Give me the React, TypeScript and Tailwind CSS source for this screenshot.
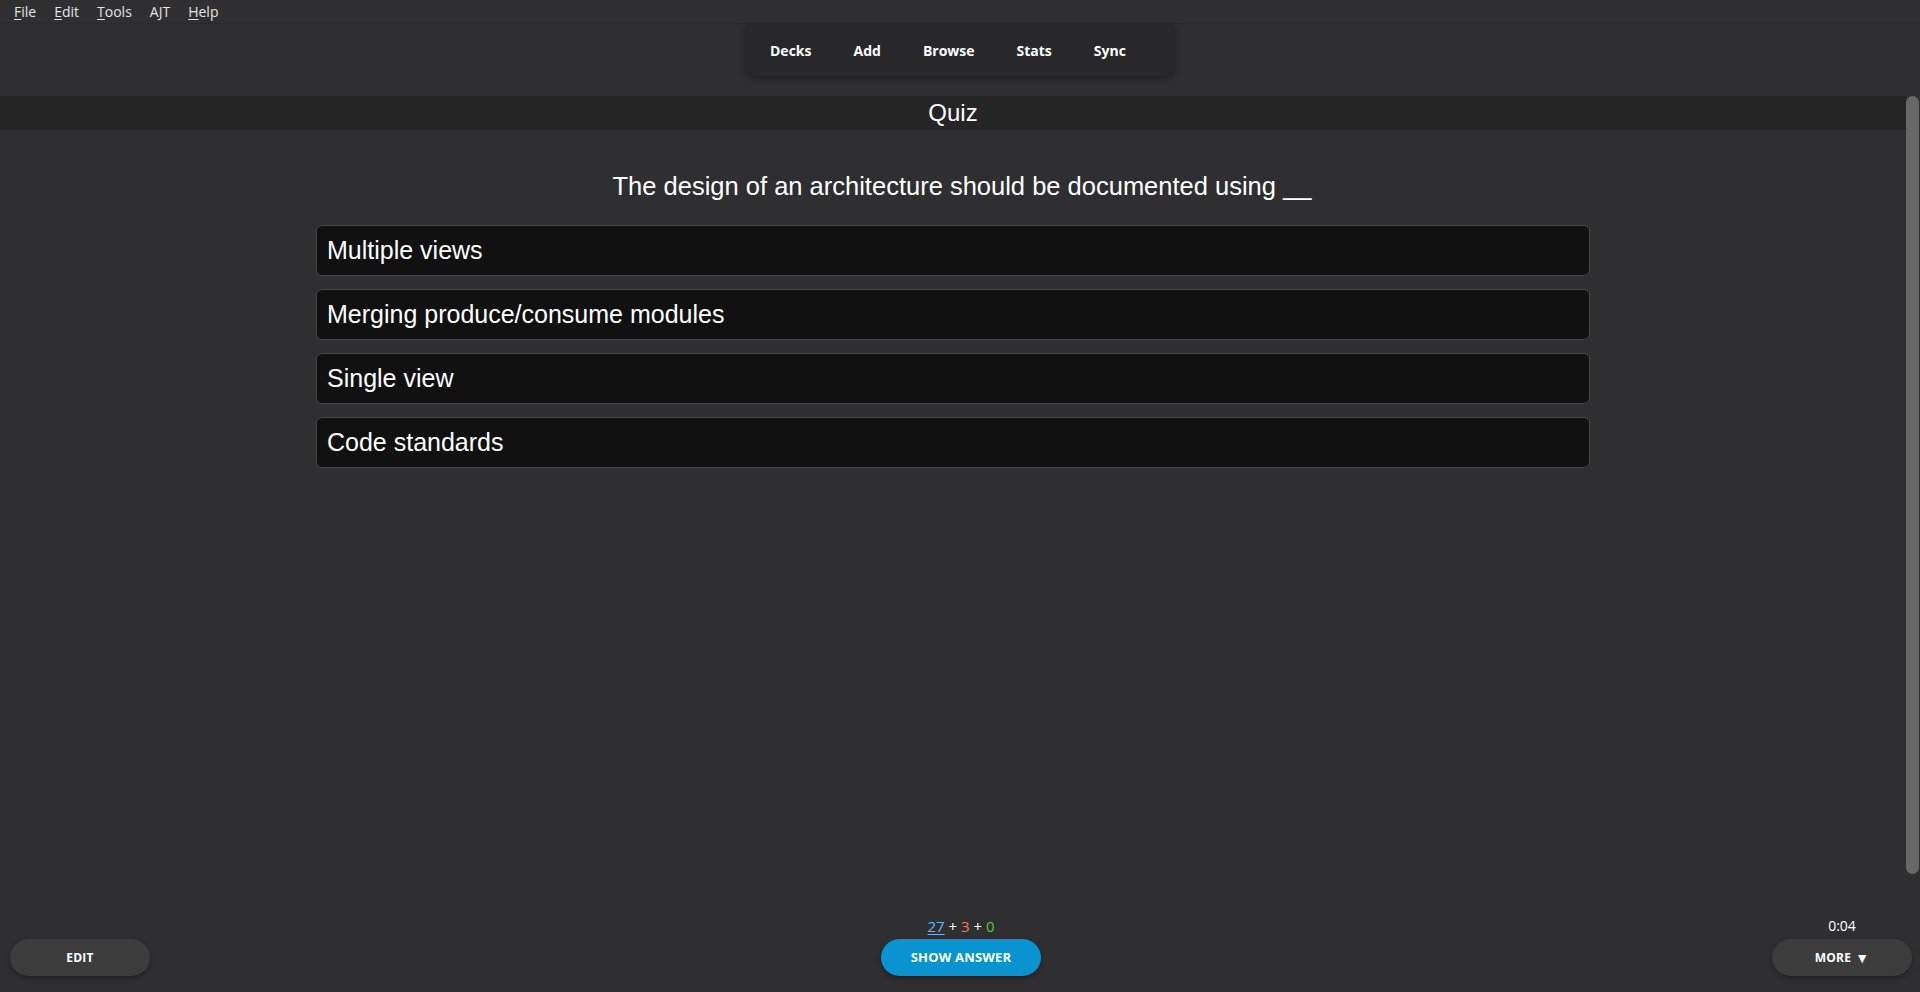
import React from "react";

const menus = [
  { label: "File", key: "F" },
  { label: "Edit", key: "E" },
  { label: "Tools", key: "T" },
  { label: "AJT", key: "" },
  { label: "Help", key: "H" },
];

const tabs = ["Decks", "Add", "Browse", "Stats", "Sync"];

const choices = ["Multiple views", "Merging produce/consume modules", "Single view", "Code standards"];

const ui = { fontFamily: '"Open Sans", "Noto Sans", sans-serif' };
const card = { fontFamily: '"Liberation Sans", Arial, sans-serif' };

function MenuBar() {
  return (
    <div className="flex h-[24px] items-center border-b border-[#2a2a2c] bg-[#2f2f31] pl-[5px] text-[14px] text-[#e4e4e4]" style={ui}>
      {menus.map((m) => (
        <span key={m.label} className="px-[9px] leading-none">
          {m.key ? (
            <>
              <span className="underline underline-offset-2">{m.key}</span>
              {m.label.slice(1)}
            </>
          ) : (
            m.label
          )}
        </span>
      ))}
    </div>
  );
}

function Toolbar() {
  return (
    <div className="flex h-[72px] justify-center bg-[#2f2f31]">
      <nav
        className="flex h-[52px] w-[430px] items-center gap-[42px] rounded-b-[12px] bg-[#28282a] pl-[25px] shadow-[0_3px_6px_rgba(0,0,0,0.35)]"
        style={ui}
      >
        {tabs.map((t) => (
          <span key={t} className="text-[14px] font-bold text-white">
            {t}
          </span>
        ))}
      </nav>
    </div>
  );
}

function Reviewer() {
  return (
    <div className="flex min-h-0 flex-1 bg-[#2f2f31]">
      <div className="flex-1" style={card}>
        <div className="flex h-[34px] items-center justify-center bg-[#252525] text-[24px] text-white">Quiz</div>
        <p className="mt-[42px] pl-[18px] text-center text-[25.5px] leading-[28px] text-white">
          The design of an architecture should be documented using __
        </p>
        <div className="mx-auto mt-[25px] flex w-[1274px] flex-col gap-[13px]">
          {choices.map((c) => (
            <div
              key={c}
              className="flex h-[51px] items-center rounded-[6px] border border-[#454545] bg-[#111111] px-[10px] text-[25px] text-white"
            >
              {c}
            </div>
          ))}
        </div>
      </div>
      <div className="flex w-[14px] flex-col pb-[6px]">
        <div className="mr-[1px] flex-1 rounded-full bg-[#676767]" />
      </div>
    </div>
  );
}

function PillButton({ children, className = "" }: { children: React.ReactNode; className?: string }) {
  return (
    <button
      type="button"
      className={`flex h-[37px] w-[140px] items-center justify-center rounded-full text-[12px] font-bold tracking-[0.2px] text-white shadow-[0_2px_5px_rgba(0,0,0,0.35)] ${className}`}
      style={ui}
    >
      {children}
    </button>
  );
}

function BottomBar() {
  return (
    <div className="flex h-[112px] items-end justify-between bg-[#2f2f31] px-[8px] pb-[16px]" style={ui}>
      <div className="pl-[2px]">
        <PillButton className="bg-[#3c3c3c]">EDIT</PillButton>
      </div>
      <div className="flex flex-col items-center">
        <div className="mb-[3px] text-[15px] leading-[20px]">
          <span className="text-[#6eb4f0] underline underline-offset-2">27</span>
          <span className="text-white"> + </span>
          <span className="text-[#ef7a55]">3</span>
          <span className="text-white"> + </span>
          <span className="text-[#5ec43a]">0</span>
        </div>
        <PillButton className="w-[160px] bg-[#0a93d1] text-[13px]">SHOW ANSWER</PillButton>
      </div>
      <div className="flex flex-col items-center">
        <div className="mb-[3px] text-[14px] leading-[20px] text-white">0:04</div>
        <PillButton className="bg-[#3c3c3c]">
          MORE <span className="ml-[4px] text-[14px] leading-none">▼</span>
        </PillButton>
      </div>
    </div>
  );
}

export default function App() {
  return (
    <div className="flex h-screen w-full flex-col overflow-hidden bg-[#2f2f31]">
      <MenuBar />
      <Toolbar />
      <Reviewer />
      <BottomBar />
    </div>
  );
}
